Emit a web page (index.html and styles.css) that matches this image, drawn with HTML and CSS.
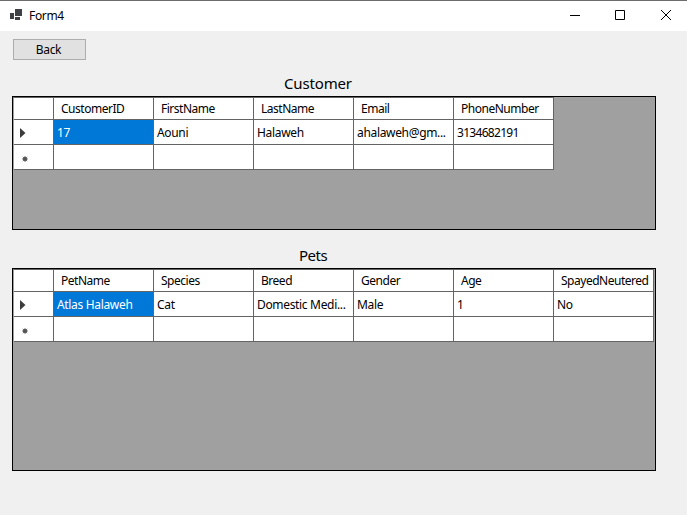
FILE: index.html
```html
<!DOCTYPE html>
<html lang="en">
<head>
<meta charset="utf-8">
<title>Form4</title>
<link rel="stylesheet" href="styles.css">
</head>
<body>
<header class="titlebar">
  <svg class="app-icon" width="12" height="11" viewBox="0 0 12 11" shape-rendering="crispEdges"><path fill="#3f4244" d="M5 0h7v7H5zM0 4h4v6H0zM5 8h5v3H5z"/></svg>
  <span class="title">Form4</span>
  <div class="controls">
    <svg width="10" height="10" viewBox="0 0 10 10"><path d="M0 5.5h10" stroke="#000"/></svg>
    <svg width="10" height="10" viewBox="0 0 10 10"><path d="M.5.5h9v9h-9z" fill="none" stroke="#000"/></svg>
    <svg width="10" height="10" viewBox="0 0 10 10"><path d="M0 0l10 10M10 0L0 10" stroke="#000"/></svg>
  </div>
</header>
<main>
  <button class="back"><span>Back</span></button>
  <h2 class="customer-title">Customer</h2>
  <section class="grid-view customers">
    <div class="table">
      <div class="row head"><div class="cell handle"></div><div class="cell">CustomerID</div><div class="cell">FirstName</div><div class="cell">LastName</div><div class="cell">Email</div><div class="cell">PhoneNumber</div></div>
      <div class="row"><div class="cell handle"><svg class="arrow" width="6" height="10" viewBox="0 0 6 10"><path fill="#3c3c3c" d="M0 0l5.5 5L0 10z"/></svg></div><div class="cell selected">17</div><div class="cell">Aouni</div><div class="cell">Halaweh</div><div class="cell">ahalaweh@gm...</div><div class="cell digits">3134682191</div></div>
      <div class="row"><div class="cell handle"><svg class="star" width="6" height="6" viewBox="0 0 6 6"><circle cx="3" cy="3" r="2" fill="#444"/><path d="M3 0v6M0 3h6M.8.8l4.4 4.4M5.2.8L.8 5.2" stroke="#555" stroke-width=".8"/></svg></div><div class="cell"></div><div class="cell"></div><div class="cell"></div><div class="cell"></div><div class="cell"></div></div>
    </div>
  </section>
  <h2 class="pets-title">Pets</h2>
  <section class="grid-view pets">
    <div class="table">
      <div class="row head"><div class="cell handle"></div><div class="cell">PetName</div><div class="cell">Species</div><div class="cell">Breed</div><div class="cell">Gender</div><div class="cell">Age</div><div class="cell">SpayedNeutered</div></div>
      <div class="row"><div class="cell handle"><svg class="arrow" width="6" height="10" viewBox="0 0 6 10"><path fill="#3c3c3c" d="M0 0l5.5 5L0 10z"/></svg></div><div class="cell selected">Atlas Halaweh</div><div class="cell">Cat</div><div class="cell">Domestic Medi...</div><div class="cell">Male</div><div class="cell">1</div><div class="cell">No</div></div>
      <div class="row"><div class="cell handle"><svg class="star" width="6" height="6" viewBox="0 0 6 6"><circle cx="3" cy="3" r="2" fill="#444"/><path d="M3 0v6M0 3h6M.8.8l4.4 4.4M5.2.8L.8 5.2" stroke="#555" stroke-width=".8"/></svg></div><div class="cell"></div><div class="cell"></div><div class="cell"></div><div class="cell"></div><div class="cell"></div><div class="cell"></div></div>
    </div>
  </section>
</main>
</body>
</html>
```
FILE: styles.css
```css
* { box-sizing: border-box; }
body {
  margin: 0;
  height: 515px;
  overflow: hidden;
  background: #f0f0f0;
  color: #000;
  font: 12px/16px "Noto Sans", "Open Sans", sans-serif;
  letter-spacing: -0.33px;
}
svg { display: block; flex: none; }
.titlebar {
  display: flex;
  height: 31px;
  padding-left: 10px;
  background: #fff;
  border-top: 1px solid #6d6d6d;
}
.app-icon { margin-top: 8px; }
.title { margin: 7px 0 0 7px; }
.controls {
  display: flex;
  gap: 35px;
  margin: 9px 16px 0 auto;
}
.controls svg:nth-child(3) { margin-left: 1px; }
main { padding: 8px 0 0 12px; }
.back {
  display: block;
  width: 73px;
  height: 21px;
  margin-left: 1px;
  padding: 0 2px 0 0;
  border: 1px solid #adadad;
  background: #e1e1e1;
  color: #000;
  font: inherit;
  letter-spacing: inherit;
}
h2 {
  margin: 0;
  width: 100px;
  height: 20px;
  font-size: 15px;
  line-height: 20px;
  font-weight: 400;
  letter-spacing: -0.15px;
}
.customer-title { margin: 13px 0 3px 272px; }
.pets-title { margin: 15px 0 3px 287px; letter-spacing: -0.5px; }
.grid-view {
  width: 644px;
  border: 1px solid #000;
  background: #a0a0a0;
}
.customers { height: 134px; }
.pets { height: 203px; }
.table {
  width: max-content;
  border-left: 1px solid #a0a0a0;
  border-top: 1px solid #646464;
}
.row { display: flex; height: 25px; }
.row.head { height: 22px; }
.cell {
  width: 100px;
  padding: 5px 0 0 3px;
  border-right: 1px solid #646464;
  border-bottom: 1px solid #646464;
  background: #fff;
  white-space: nowrap;
}
.head .cell { padding: 3px 0 0 7px; letter-spacing: -0.48px; }
.cell.handle { width: 40px; padding: 0; }
.row:not(.head) .handle { box-shadow: inset 1px 0 #fff; }
.cell.digits { letter-spacing: -0.7px; }
.cell.selected { background: #0078d7; color: #fff; }
.arrow { margin: 8px 0 0 6px; }
.star { margin: 11px 0 0 8px; }
```
